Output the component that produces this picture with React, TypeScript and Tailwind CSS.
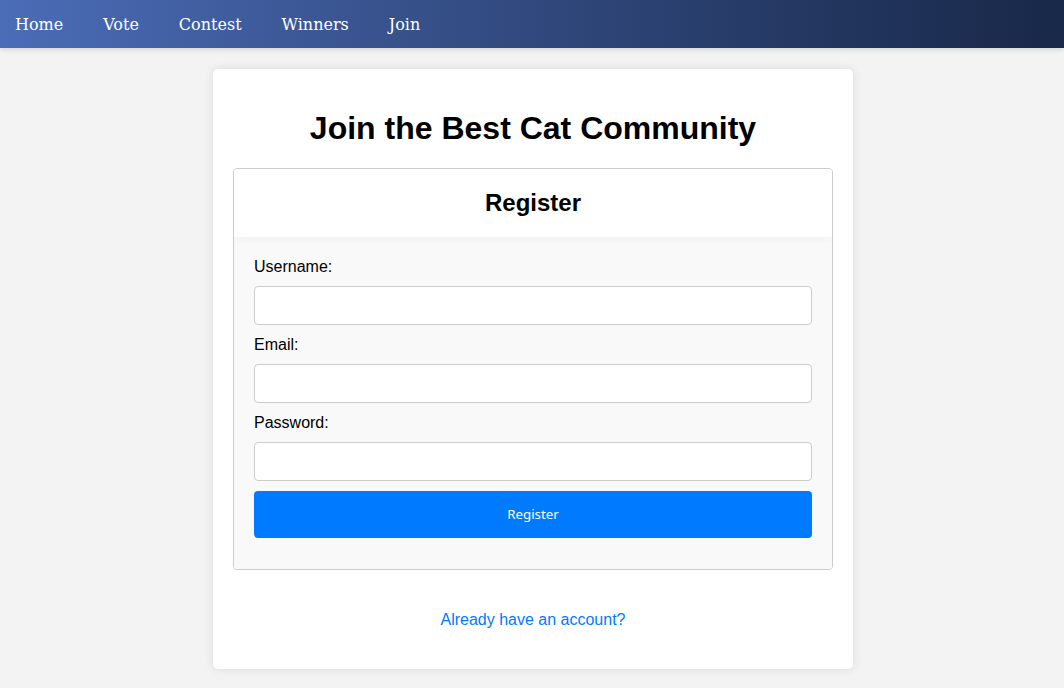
import React from 'react';

const fields = [
  { id: 'username', label: 'Username:', type: 'text' },
  { id: 'email', label: 'Email:', type: 'email' },
  { id: 'password', label: 'Password:', type: 'password' },
];

const links = ['Home', 'Vote', 'Contest', 'Winners', 'Join'];

export default function App() {
  return (
    <div className="min-h-screen bg-[#f3f3f3] font-['Liberation_Sans',Arial,sans-serif] text-black">
      {/* Nav */}
      <nav className="h-[48px] flex items-center gap-10 pl-[15px] pt-[2px] bg-gradient-to-r from-[#4b6cb7] to-[#182848] shadow-[0_2px_5px_rgba(0,0,0,0.12)]">
        {links.map((l) => (
          <a key={l} href="#" className="text-white text-base font-['DejaVu_Serif',serif] leading-none">
            {l}
          </a>
        ))}
      </nav>

      {/* Card */}
      <div className="flex justify-center pl-[2px] pt-[21px]">
        <div className="w-[640px] bg-white rounded-[5px] shadow-[0_0_10px_rgba(0,0,0,0.1)] p-5">
          <h1 className="text-[32px] font-bold text-center mt-[21px] mb-[21px] leading-[37px]">
            Join the Best Cat Community
          </h1>

          <div className="border border-[#ccc] rounded overflow-hidden">
            <div className="relative z-10 bg-white h-[68px] flex items-center justify-center shadow-[0_2px_8px_rgba(0,0,0,0.035)]">
              <h2 className="text-2xl font-bold leading-7">Register</h2>
            </div>
            <form className="bg-[#f9f9f9] px-5 pt-[21px] pb-[31px]" onSubmit={(e) => e.preventDefault()}>
              {fields.map((f, i) => (
                <div key={f.id} className={i < 2 ? 'mb-[11px]' : 'mb-[10px]'}>
                  <label htmlFor={f.id} className="block text-base leading-[18px] mb-[10px]">
                    {f.label}
                  </label>
                  <input
                    id={f.id}
                    type={f.type}
                    className="block w-full h-[39px] bg-white border border-[#ccc] rounded px-2"
                  />
                </div>
              ))}
              <button
                type="submit"
                className="w-full h-[47px] bg-[#007bff] text-white rounded text-[13.33px] font-['Noto_Sans',sans-serif]"
              >
                Register
              </button>
            </form>
          </div>

          <p className="text-center mt-[41px] mb-5 leading-[18px]">
            <a href="#" className="text-[#007bff]">Already have an account?</a>
          </p>
        </div>
      </div>
    </div>
  );
}
